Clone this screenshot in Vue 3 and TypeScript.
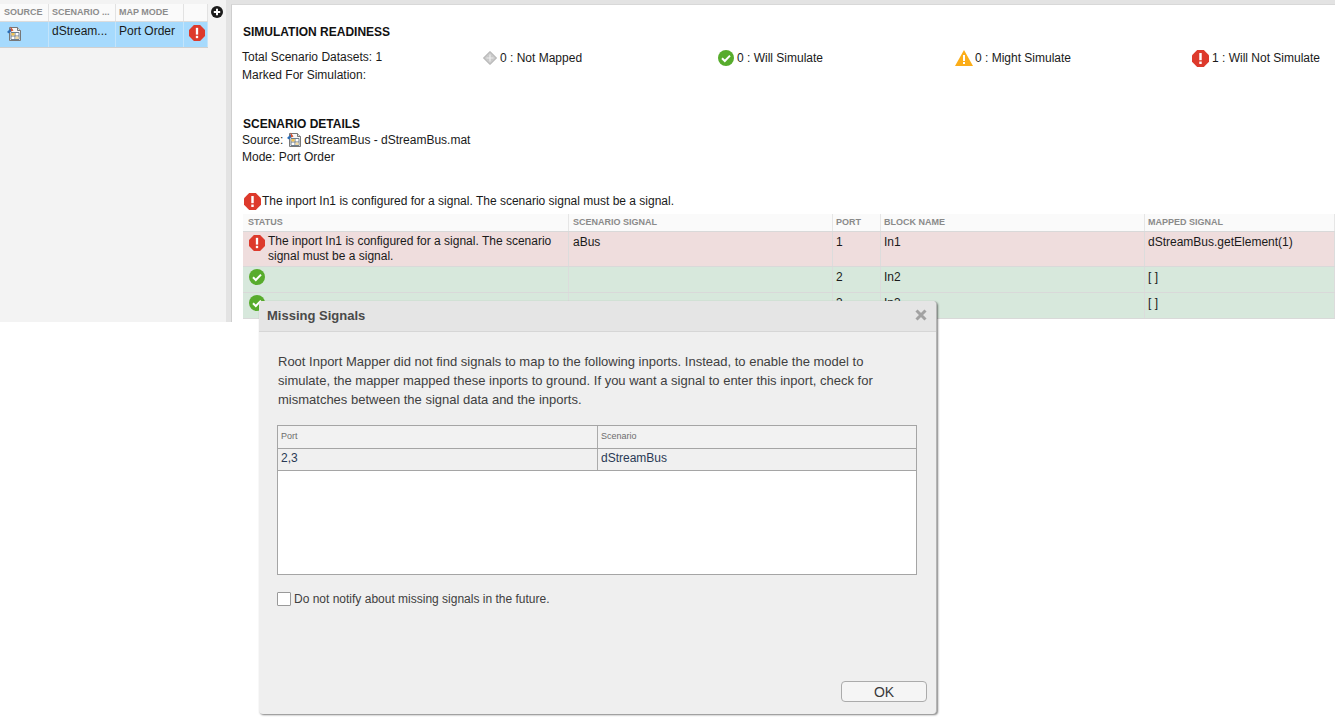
<script setup lang="ts">
interface Row { kind: string; status: string; signal: string; port: string; block: string; mapped: string }
const rows: Row[] = [
  { kind: 'bad', status: 'The inport In1 is configured for a signal. The scenario signal must be a signal.', signal: 'aBus', port: '1', block: 'In1', mapped: 'dStreamBus.getElement(1)' },
  { kind: 'ok', status: '', signal: '', port: '2', block: 'In2', mapped: '[ ]' },
  { kind: 'ok', status: '', signal: '', port: '3', block: 'In3', mapped: '[ ]' },
]
const errorPoints = '5.5,0 12.5,0 18,5.5 18,12.5 12.5,18 5.5,18 0,12.5 0,5.5'
</script>

<template>
  <div class="page">
    <div class="app">
      <aside class="left">
        <div class="mini-table">
          <div class="mini-row mini-head">
            <div class="c1">SOURCE</div><div class="c2">SCENARIO ...</div><div class="c3">MAP MODE</div><div class="c4"></div>
          </div>
          <div class="mini-row mini-sel">
            <div class="c1">
              <svg class="file" width="15" height="16" viewBox="0 0 15 16"><path d="M2.500 1.500h8l3 3v10h-11z" fill="#f7f7f7" stroke="#777"/><path d="M10.500 1.500v3h3" fill="#ddd" stroke="#777"/><path d="M4 6.500h8v7H4z" fill="#fff" stroke="#6f7f8f"/><path d="M8 6.500v7M4 10h8" stroke="#6f7f8f"/><path d="M4.500 7h3v2.500h-3z" fill="#f2c24f"/><path d="M8.500 10.500h3v2.500h-3z" fill="#f2d9a0"/><path d="M0 6l4-4 1.500 2L2 7.500z" fill="#2c6db5"/><path d="M3.500 0.500l3 4-2.500 1z" fill="#d9532c"/></svg>
            </div>
            <div class="c2">dStream...</div>
            <div class="c3">Port Order</div>
            <div class="c4">
              <svg class="err" width="16" height="16" viewBox="0 0 18 18"><polygon :points="errorPoints" fill="#dd3a2c"/><rect x="7.7" y="3.2" width="2.6" height="7.6" fill="#fff"/><rect x="7.7" y="12.2" width="2.6" height="2.6" fill="#fff"/></svg>
            </div>
          </div>
        </div>
        <div class="add">
          <svg width="12" height="12" viewBox="0 0 12 12"><circle cx="6" cy="6" r="6" fill="#1c1c1c"/><path d="M6 2.800v6.400M2.800 6h6.400" stroke="#fff" stroke-width="2"/></svg>
        </div>
      </aside>
      <main class="right">
        <h2 class="title first">SIMULATION READINESS</h2>
        <div class="readiness">
          <div class="totals">
            <div>Total Scenario Datasets: 1</div>
            <div>Marked For Simulation:</div>
          </div>
          <div class="stat s1">
            <svg width="14" height="14" viewBox="0 0 14 14"><path d="M7 .5L13.500 7 7 13.500.5 7z" fill="#c9c9c9" stroke="#a8a8a8"/><path d="M7 3.500v7M3.500 7h7" stroke="#eee" stroke-width="1.2"/></svg>
            <span>0 : Not Mapped</span>
          </div>
          <div class="stat s2">
            <svg width="16" height="16" viewBox="0 0 16 16"><circle cx="8" cy="8" r="8" fill="#57ac2c"/><path d="M4 8.300l2.800 2.700L12 5.600" fill="none" stroke="#fff" stroke-width="2"/></svg>
            <span>0 : Will Simulate</span>
          </div>
          <div class="stat s3">
            <svg width="18" height="16" viewBox="0 0 18 16"><path d="M9 0l9 16H0z" fill="#fbad18"/><rect x="8" y="5" width="2" height="6" fill="#fff"/><rect x="8" y="12" width="2" height="2" fill="#fff"/></svg>
            <span>0 : Might Simulate</span>
          </div>
          <div class="stat s4">
            <svg width="17" height="17" viewBox="0 0 18 18"><polygon :points="errorPoints" fill="#dd3a2c"/><rect x="7.7" y="3.2" width="2.6" height="7.6" fill="#fff"/><rect x="7.7" y="12.2" width="2.6" height="2.6" fill="#fff"/></svg>
            <span>1 : Will Not Simulate</span>
          </div>
        </div>

        <h2 class="title second">SCENARIO DETAILS</h2>
        <div class="line source">
          <span>Source:</span>
          <svg class="file" width="15" height="16" viewBox="0 0 15 16"><path d="M2.500 1.500h8l3 3v10h-11z" fill="#f7f7f7" stroke="#777"/><path d="M10.500 1.500v3h3" fill="#ddd" stroke="#777"/><path d="M4 6.500h8v7H4z" fill="#fff" stroke="#6f7f8f"/><path d="M8 6.500v7M4 10h8" stroke="#6f7f8f"/><path d="M4.500 7h3v2.500h-3z" fill="#f2c24f"/><path d="M8.500 10.500h3v2.500h-3z" fill="#f2d9a0"/><path d="M0 6l4-4 1.500 2L2 7.500z" fill="#2c6db5"/><path d="M3.500 0.500l3 4-2.500 1z" fill="#d9532c"/></svg>
          <span>dStreamBus - dStreamBus.mat</span>
        </div>
        <div class="line mode">Mode: Port Order</div>

        <div class="alert">
          <svg width="17" height="17" viewBox="0 0 18 18"><polygon :points="errorPoints" fill="#dd3a2c"/><rect x="7.7" y="3.2" width="2.6" height="7.6" fill="#fff"/><rect x="7.7" y="12.2" width="2.6" height="2.6" fill="#fff"/></svg>
          <span>The inport In1 is configured for a signal. The scenario signal must be a signal.</span>
        </div>

        <div class="grid">
          <div class="g-row g-head">
            <div>STATUS</div><div>SCENARIO SIGNAL</div><div>PORT</div><div>BLOCK NAME</div><div>MAPPED SIGNAL</div>
          </div>
          <div v-for="r in rows" :key="r.port" class="g-row" :class="r.kind">
            <div class="status">
              <svg v-if="r.kind === 'bad'" width="16" height="16" viewBox="0 0 18 18"><polygon :points="errorPoints" fill="#dd3a2c"/><rect x="7.7" y="3.2" width="2.6" height="7.6" fill="#fff"/><rect x="7.7" y="12.2" width="2.6" height="2.6" fill="#fff"/></svg>
              <svg v-else width="16" height="16" viewBox="0 0 16 16"><circle cx="8" cy="8" r="8" fill="#57ac2c"/><path d="M4 8.300l2.800 2.700L12 5.600" fill="none" stroke="#fff" stroke-width="2"/></svg>
              <span v-if="r.status">{{ r.status }}</span>
            </div>
            <div>{{ r.signal }}</div>
            <div>{{ r.port }}</div>
            <div>{{ r.block }}</div>
            <div>{{ r.mapped }}</div>
          </div>
        </div>
      </main>
    </div>

    <section class="dialog">
      <header class="d-head">
        <span>Missing Signals</span>
        <svg width="12" height="12" viewBox="0 0 12 12"><path d="M1.500 1.500l9 9M10.500 1.500l-9 9" stroke="#a2a2a2" stroke-width="3"/></svg>
      </header>
      <div class="d-body">
        <p>Root Inport Mapper did not find signals to map to the following inports. Instead, to enable the model to simulate, the mapper mapped these inports to ground. If you want a signal to enter this inport, check for mismatches between the signal data and the inports.</p>
        <div class="d-table">
          <div class="d-tr d-th"><div>Port</div><div>Scenario</div></div>
          <div class="d-tr d-td"><div>2,3</div><div>dStreamBus</div></div>
        </div>
        <label class="check"><span class="box"></span>Do not notify about missing signals in the future.</label>
        <div class="foot"><button type="button">OK</button></div>
      </div>
    </section>
  </div>
</template>

<style>
html, body { margin: 0; background: #fff; }
</style>

<style scoped>
.page { position: relative; width: 1335px; height: 717px; overflow: hidden; background: #fff; font-family: "Liberation Sans", Arial, sans-serif; font-size: 12px; color: #1a1a1a; }
.app { display: flex; height: 322px; overflow: hidden; background: #e3e3e3; }
.left { width: 226px; flex: none; background: #f3f3f3; display: flex; align-items: flex-start; padding-top: 4px; box-sizing: border-box; }
.mini-table { width: 208px; flex: none; }
.mini-row { display: grid; grid-template-columns: 49px 67px 68px 24px; }
.mini-row > div { box-sizing: border-box; border-right: 1px solid #e2e2e2; overflow: hidden; white-space: nowrap; }
.mini-head { height: 17px; background: #fafafa; border-bottom: 1px solid #dcdcdc; }
.mini-head > div { font-size: 9px; font-weight: bold; color: #8c8c8c; padding: 2px 0 0 4px; line-height: 12px; }
.mini-head .c2 { padding-left: 3px; }
.mini-head .c3 { padding-left: 3px; }
.mini-sel { height: 25px; background: #a6dafd; border-bottom: 1px solid #d0d0d0; }
.mini-sel > div { padding: 2px 0 0 3px; line-height: 14px; border-right-color: #c3e4fb; }
.mini-sel .c1 { padding: 4px 0 0 7px; }
.mini-sel .c4 { padding: 3px 0 0 5px; }
.file { display: block; flex: none; }
.add { margin: 2px 0 0 3px; height: 12px; }
.add svg { display: block; }
.right { margin-left: 5px; margin-top: 4px; flex: 1; background: #fff; border-left: 1px solid #cfcfcf; border-top: 1px solid #d8d8d8; padding: 0 0 0 10px; min-width: 0; }
.title { margin: 0; font-size: 12px; line-height: 14px; font-weight: bold; color: #111; padding-left: 1px; }
.first { margin-top: 20px; }
.readiness { display: flex; height: 36px; margin-top: 9px; }
.totals { width: 241px; flex: none; line-height: 18px; }
.stat { display: flex; align-items: center; gap: 3px; height: 18px; line-height: 18px; flex: none; margin-top: 1px; }
.s1 { width: 235px; }
.s2 { width: 237px; }
.s3 { width: 237px; gap: 2px; }
.s4 { width: 140px; gap: 3px; }
.second { margin-top: 33px; }
.line { line-height: 16px; display: flex; align-items: center; gap: 4px; }
.source { height: 17px; }
.source span:last-child { margin-left: -2px; }
.mode { height: 17px; }
.alert { display: flex; align-items: center; gap: 1px; margin-top: 27px; margin-left: 2px; height: 18px; line-height: 18px; }
.grid { margin-top: 4px; margin-left: 1px; width: 1092px; }
.g-row { display: grid; grid-template-columns: 326px 264px 48px 264px 190px; border-bottom: 1px solid #d9d9d9; box-sizing: border-box; }
.g-row > div { box-sizing: border-box; border-right: 1px solid #dcdcdc; padding: 3px 4px 0; line-height: 15px; }
.g-row > div:nth-child(n+3) { padding-left: 3px; }
.g-head { height: 18px; background: #fafafa; }
.g-head > div { font-size: 9px; font-weight: bold; color: #8a8a8a; padding-top: 2px; line-height: 12px; border-right-color: #e6e6e6; }
.g-head > div:first-child { padding-left: 5px; }
.bad { height: 35px; background: #efdddd; }
.ok { height: 26px; background: #d7e8dc; }
.status { display: flex; align-items: flex-start; gap: 3px; padding-left: 6px !important; }
.status svg { flex: none; }
.status span { line-height: 15px; margin-top: -1px; }
.ok .status { padding-top: 2px; }
.dialog { position: absolute; left: 259px; top: 301px; width: 678px; height: 413px; background: #efefef; border-radius: 4px; border-right: 1px solid #b5b5b5; box-shadow: 1px 1px 2px rgba(0,0,0,.5); box-sizing: border-box; }
.d-head { box-sizing: border-box; height: 31px; background: #e5e5e5; border-bottom: 1px solid #d6d6d6; border-radius: 4px 4px 0 0; display: flex; align-items: center; justify-content: space-between; padding: 0 9px 2px 8px; font-size: 13px; font-weight: bold; color: #4a4a4a; }
.d-body { padding: 20px 20px 0 18px; }
.d-body p { margin: 0 0 0 1px; line-height: 19px; color: #404040; width: 620px; font-size: 13px; }
.d-table { margin-top: 16px; width: 640px; height: 150px; box-sizing: border-box; border: 1px solid #a5a5a5; background: #fff; }
.d-tr { display: grid; grid-template-columns: 320px 1fr; }
.d-tr > div { padding-left: 3px; border-right: 1px solid #ababab; }
.d-tr > div:last-child { border-right: 0; }
.d-th { height: 22px; background: #f2f2f2; border-bottom: 1px solid #a5a5a5; font-size: 9px; line-height: 20px; color: #6d6d6d; }
.d-td { height: 21px; background: #f0f0f0; border-bottom: 1px solid #a5a5a5; line-height: 19px; color: #2a3a55; }
.check { display: flex; align-items: center; gap: 3px; margin-top: 17px; height: 14px; color: #404040; }
.box { width: 14px; height: 14px; box-sizing: border-box; border: 1px solid #9a9a9a; border-radius: 1px; background: #fff; flex: none; }
.foot { display: flex; justify-content: flex-end; margin-top: 75px; width: 650px; }
button { width: 86px; height: 21px; padding: 0; background: #f5f5f5; border: 1px solid #ababab; border-radius: 4px; font: 14px "Liberation Sans", Arial, sans-serif; color: #3a3a3a; }
</style>
